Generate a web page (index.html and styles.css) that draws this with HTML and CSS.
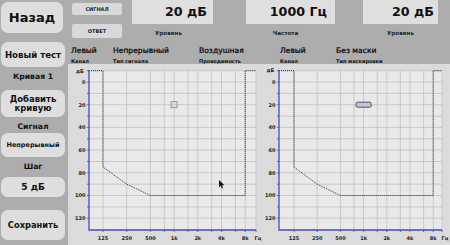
FILE: index.html
```html
<!DOCTYPE html>
<html lang="ru">
<head>
<meta charset="utf-8">
<title>Аудиометр</title>
<link rel="stylesheet" href="styles.css">
</head>
<body>
<div class="app">
  <aside class="side">
    <div class="btn btn-back">Назад</div>
    <div class="btn btn-new">Новый тест</div>
    <div class="lbl lbl-curve">Кривая 1</div>
    <div class="btn btn-add">Добавить<br>кривую</div>
    <div class="lbl lbl-sig">Сигнал</div>
    <div class="btn btn-cont">Непрерывный</div>
    <div class="lbl lbl-step">Шаг</div>
    <div class="btn btn-step">5 дБ</div>
    <div class="btn btn-save">Сохранить</div>
  </aside>
  <main class="main">
    <div class="top">
      <div class="sigbtns">
        <div class="sbtn sbtn-sig">СИГНАЛ</div>
        <div class="sbtn sbtn-ans">ОТВЕТ</div>
      </div>
      <div class="val val1">
        <div class="vbox">20 дБ</div>
        <div class="vlbl">Уровень</div>
      </div>
      <div class="val val2">
        <div class="vbox">1000 Гц</div>
        <div class="vlbl">Частота</div>
      </div>
      <div class="val val3">
        <div class="vbox">20 дБ</div>
        <div class="vlbl">Уровень</div>
      </div>
    </div>
    <div class="info">
      <div class="it it1"><div class="it-t">Левый</div><div class="it-s">Канал</div></div>
      <div class="it it2"><div class="it-t">Непрерывный</div><div class="it-s">Тип сигнала</div></div>
      <div class="it it3"><div class="it-t">Воздушная</div><div class="it-s">Проводимость</div></div>
      <div class="it it4"><div class="it-t">Левый</div><div class="it-s">Канал</div></div>
      <div class="it it5"><div class="it-t">Без маски</div><div class="it-s">Тип маскировки</div></div>
    </div>
    <div class="charts">
      <svg class="chart chart-l" width="194" height="181" viewBox="0 0 194 181">
        <rect class="plot" x="21" y="6.7" width="167" height="159.3"/>
        <path class="grid" d="M21,6.7H188M21,18H188M21,29.4H188M21,40.7H188M21,52.1H188M21,63.4H188M21,74.8H188M21,86.1H188M21,97.5H188M21,108.8H188M21,120.2H188M21,131.5H188M21,142.9H188M21,154.2H188
          M35,6.7V166M58.7,6.7V166M82.4,6.7V166M96.3,6.7V166M106.1,6.7V166M120,6.7V166M129.8,6.7V166M143.7,6.7V166M153.5,6.7V166M167.4,6.7V166M177.2,6.7V166M188,6.7V166"/>
        <path class="dots" d="M21,6.7H35V103.1L58.7,120.2L82.4,131.5H177.2V6.7H188"/>
        <path class="axis" d="M21,6V166H188"/>
        <path class="tick" d="M19,6.7H21M19,18H21M19,29.4H21M19,40.7H21M19,52.1H21M19,63.4H21M19,74.8H21M19,86.1H21M19,97.5H21M19,108.8H21M19,120.2H21M19,131.5H21M19,142.9H21M19,154.2H21
          M35,166V168M58.7,166V168M82.4,166V168M96.3,166V168M106.1,166V168M120,166V168M129.8,166V168M143.7,166V168M153.5,166V168M167.4,166V168M177.2,166V168M188,166V168"/>
        <text class="ax" x="12" y="8.8" text-anchor="middle">дБ</text>
        <text class="ax" x="17.5" y="19.8" text-anchor="end">0</text>
        <text class="ax" x="17.5" y="42.5" text-anchor="end">20</text>
        <text class="ax" x="17.5" y="65.2" text-anchor="end">40</text>
        <text class="ax" x="17.5" y="87.9" text-anchor="end">60</text>
        <text class="ax" x="17.5" y="110.6" text-anchor="end">80</text>
        <text class="ax" x="17.5" y="133.3" text-anchor="end">100</text>
        <text class="ax" x="17.5" y="156" text-anchor="end">120</text>
        <text class="ax" x="35" y="175.8" text-anchor="middle">125</text>
        <text class="ax" x="58.7" y="175.8" text-anchor="middle">250</text>
        <text class="ax" x="82.4" y="175.8" text-anchor="middle">500</text>
        <text class="ax" x="106.1" y="175.8" text-anchor="middle">1k</text>
        <text class="ax" x="129.8" y="175.8" text-anchor="middle">2k</text>
        <text class="ax" x="153.5" y="175.8" text-anchor="middle">4k</text>
        <text class="ax" x="177.2" y="175.8" text-anchor="middle">8k</text>
        <text class="ax" x="190" y="175.8" text-anchor="middle">Гц</text>
        <rect class="mark-sq" x="103.1" y="37.7" width="6" height="6"/>
        <path class="cursor" d="M151,116V123.5L152.8,121.8L154,124.5L155.1,124L153.9,121.3H156.4Z"/>
      </svg>
      <svg class="chart chart-r" width="188" height="181" viewBox="0 0 188 181">
        <rect class="plot" x="17" y="6.7" width="163" height="159.3"/>
        <path class="grid" d="M17,6.7H180M17,18H180M17,29.4H180M17,40.7H180M17,52.1H180M17,63.4H180M17,74.8H180M17,86.1H180M17,97.5H180M17,108.8H180M17,120.2H180M17,131.5H180M17,142.9H180M17,154.2H180
          M32,6.7V166M55.2,6.7V166M78.4,6.7V166M92,6.7V166M101.6,6.7V166M115.2,6.7V166M124.8,6.7V166M138.4,6.7V166M148,6.7V166M161.6,6.7V166M171.2,6.7V166M180,6.7V166"/>
        <path class="dots" d="M17,6.7H32V103.1L55.2,120.2L78.4,131.5H171.2V6.7H180"/>
        <path class="axis" d="M17,6V166H180"/>
        <path class="tick" d="M15,6.7H17M15,18H17M15,29.4H17M15,40.7H17M15,52.1H17M15,63.4H17M15,74.8H17M15,86.1H17M15,97.5H17M15,108.8H17M15,120.2H17M15,131.5H17M15,142.9H17M15,154.2H17
          M32,166V168M55.2,166V168M78.4,166V168M92,166V168M101.6,166V168M115.2,166V168M124.8,166V168M138.4,166V168M148,166V168M161.6,166V168M171.2,166V168M180,166V168"/>
        <text class="ax" x="8.5" y="7.8" text-anchor="middle">дБ</text>
        <text class="ax" x="13.5" y="19.8" text-anchor="end">0</text>
        <text class="ax" x="13.5" y="42.5" text-anchor="end">20</text>
        <text class="ax" x="13.5" y="65.2" text-anchor="end">40</text>
        <text class="ax" x="13.5" y="87.9" text-anchor="end">60</text>
        <text class="ax" x="13.5" y="110.6" text-anchor="end">80</text>
        <text class="ax" x="13.5" y="133.3" text-anchor="end">100</text>
        <text class="ax" x="13.5" y="156" text-anchor="end">120</text>
        <text class="ax" x="32" y="175.8" text-anchor="middle">125</text>
        <text class="ax" x="55.2" y="175.8" text-anchor="middle">250</text>
        <text class="ax" x="78.4" y="175.8" text-anchor="middle">500</text>
        <text class="ax" x="101.6" y="175.8" text-anchor="middle">1k</text>
        <text class="ax" x="124.8" y="175.8" text-anchor="middle">2k</text>
        <text class="ax" x="148" y="175.8" text-anchor="middle">4k</text>
        <text class="ax" x="171.2" y="175.8" text-anchor="middle">8k</text>
        <text class="ax" x="183" y="175.8" text-anchor="middle">Гц</text>
        <rect class="mark-bar" x="94.1" y="38.2" width="15" height="5" rx="1.2"/>
      </svg>
    </div>
  </main>
</div>
</body>
</html>
```
FILE: styles.css
```css
html, body {
  margin: 0;
  padding: 0;
}
body {
  width: 450px;
  height: 245px;
  overflow: hidden;
  background: #adadad;
  font-family: "DejaVu Sans", "Liberation Sans", sans-serif;
  color: #111;
}
.app {
  display: flex;
  width: 450px;
  height: 245px;
}
.side {
  width: 64px;
  margin-left: 1px;
  display: flex;
  flex-direction: column;
  flex-shrink: 0;
}
.btn {
  background: #dedede;
  border-radius: 7px;
  display: flex;
  align-items: center;
  justify-content: center;
  text-align: center;
  font-weight: bold;
  box-sizing: border-box;
}
.btn-back {
  margin-top: 2px;
  height: 31px;
  font-size: 13px;
  width: 62px;
}
.btn-new {
  margin-top: 9px;
  height: 25px;
  font-size: 8.6px;
}
.lbl {
  text-align: center;
  font-weight: bold;
  font-size: 7.7px;
}
.lbl-curve {
  height: 20px;
  line-height: 20px;
}
.btn-add {
  margin-top: 3px;
  height: 27px;
  font-size: 8.5px;
  line-height: 9px;
}
.lbl-sig {
  height: 16px;
  line-height: 19px;
}
.btn-cont {
  height: 24px;
  font-size: 6.5px;
}
.lbl-step {
  height: 20px;
  line-height: 20px;
}
.btn-step {
  height: 20px;
  font-size: 9px;
}
.btn-save {
  margin-top: 13px;
  height: 30px;
  font-size: 8.3px;
}
.main {
  margin-left: 3px;
  width: 382px;
  display: flex;
  flex-direction: column;
}
.top {
  height: 40px;
  display: flex;
  align-items: flex-start;
}
.sigbtns {
  margin-left: 4px;
  width: 50px;
  padding-top: 3px;
  display: flex;
  flex-direction: column;
}
.sbtn {
  background: #d9d9d9;
  border-radius: 2px;
  font-size: 5px;
  font-weight: bold;
  text-align: center;
  color: #222;
}
.sbtn-sig {
  height: 12px;
  line-height: 12px;
}
.sbtn-ans {
  margin-top: 9px;
  height: 14px;
  line-height: 14px;
}
.vbox {
  height: 24px;
  line-height: 24px;
  background: #dfdfdf;
  text-align: right;
  font-weight: bold;
  font-size: 12.7px;
  box-sizing: border-box;
}
.vlbl {
  margin-top: 6px;
  font-size: 5.6px;
  font-weight: bold;
  line-height: 6px;
  text-align: center;
  color: #222;
}
.val1 { margin-left: 10px; width: 81px; }
.val1 .vbox { padding-right: 6px; }
.val1 .vlbl { padding-right: 8px; }
.val2 { margin-left: 33px; width: 89px; }
.val2 .vbox { padding-right: 8px; }
.val2 .vlbl { padding-right: 10px; }
.val3 { margin-left: 28px; width: 75px; }
.val3 .vbox { padding-right: 4px; }
.info {
  height: 24px;
  display: flex;
  padding-left: 3px;
}
.it-t {
  margin-top: 7px;
  height: 8px;
  line-height: 8px;
  font-size: 7.6px;
  white-space: nowrap;
  color: #000;
  -webkit-text-stroke: 0.2px #000;
}
.it-s {
  margin-top: 3px;
  height: 6px;
  line-height: 6px;
  font-size: 5px;
  font-weight: bold;
  white-space: nowrap;
}
.it1 { width: 42px; }
.it2 { width: 86px; }
.it3 { width: 81px; }
.it4 { width: 56px; }
.it5 { flex: 1; }
.charts {
  height: 181px;
  display: flex;
  background: #dbdbdb;
}
.chart {
  display: block;
  flex-shrink: 0;
}
.plot {
  fill: #e9e9e9;
}
.grid {
  fill: none;
  stroke: #c0c0c0;
  stroke-width: 0.8;
}
.dots {
  fill: none;
  stroke: #2a2a2a;
  stroke-width: 1;
  stroke-dasharray: 1 1;
}
.axis {
  fill: none;
  stroke: #4848c4;
  stroke-width: 1.3;
}
.tick {
  fill: none;
  stroke: #4848c4;
  stroke-width: 0.8;
}
.ax {
  font-family: "DejaVu Sans", sans-serif;
  font-size: 5px;
  font-weight: bold;
  fill: #222;
}
.mark-sq {
  fill: none;
  stroke: #808080;
  stroke-width: 0.8;
}
.mark-bar {
  fill: #c2c5dc;
  stroke: #3a3a3a;
  stroke-width: 0.8;
}
.cursor {
  fill: #111;
}
```
